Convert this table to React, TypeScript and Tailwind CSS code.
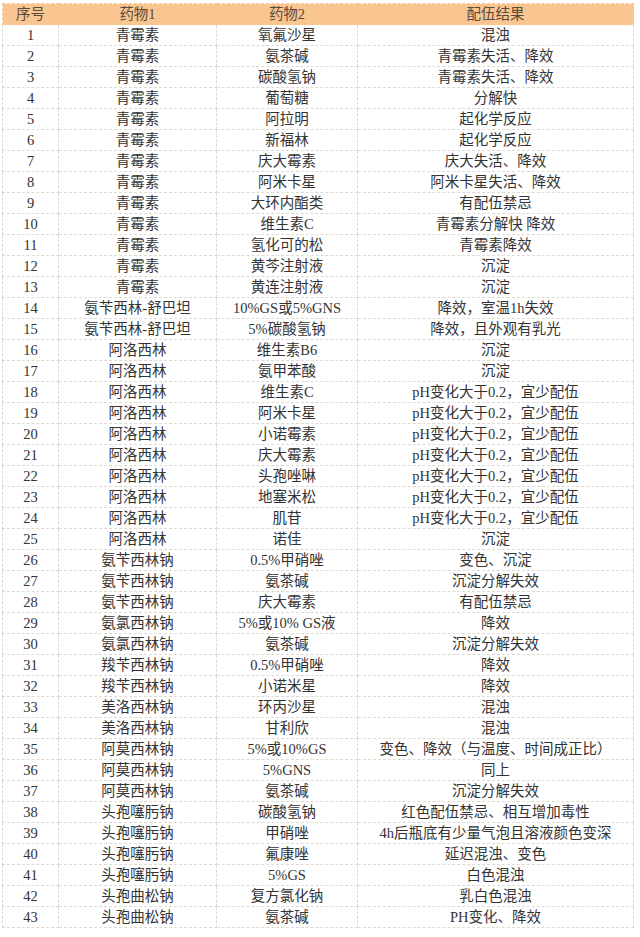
const SAME = 'pH变化大于0.2，宜少配伍';

const rows: [string, string, string][] = [
  ['青霉素', '氧氟沙星', '混浊'],
  ['青霉素', '氨茶碱', '青霉素失活、降效'],
  ['青霉素', '碳酸氢钠', '青霉素失活、降效'],
  ['青霉素', '葡萄糖', '分解快'],
  ['青霉素', '阿拉明', '起化学反应'],
  ['青霉素', '新福林', '起化学反应'],
  ['青霉素', '庆大霉素', '庆大失活、降效'],
  ['青霉素', '阿米卡星', '阿米卡星失活、降效'],
  ['青霉素', '大环内酯类', '有配伍禁忌'],
  ['青霉素', '维生素C', '青霉素分解快 降效'],
  ['青霉素', '氢化可的松', '青霉素降效'],
  ['青霉素', '黄芩注射液', '沉淀'],
  ['青霉素', '黄连注射液', '沉淀'],
  ['氨苄西林-舒巴坦', '10%GS或5%GNS', '降效，室温1h失效'],
  ['氨苄西林-舒巴坦', '5%碳酸氢钠', '降效，且外观有乳光'],
  ['阿洛西林', '维生素B6', '沉淀'],
  ['阿洛西林', '氨甲苯酸', '沉淀'],
  ['阿洛西林', '维生素C', SAME],
  ['阿洛西林', '阿米卡星', SAME],
  ['阿洛西林', '小诺霉素', SAME],
  ['阿洛西林', '庆大霉素', SAME],
  ['阿洛西林', '头孢唑啉', SAME],
  ['阿洛西林', '地塞米松', SAME],
  ['阿洛西林', '肌苷', SAME],
  ['阿洛西林', '诺佳', '沉淀'],
  ['氨苄西林钠', '0.5%甲硝唑', '变色、沉淀'],
  ['氨苄西林钠', '氨茶碱', '沉淀分解失效'],
  ['氨苄西林钠', '庆大霉素', '有配伍禁忌'],
  ['氨氯西林钠', '5%或10% GS液', '降效'],
  ['氨氯西林钠', '氨茶碱', '沉淀分解失效'],
  ['羧苄西林钠', '0.5%甲硝唑', '降效'],
  ['羧苄西林钠', '小诺米星', '降效'],
  ['美洛西林钠', '环丙沙星', '混浊'],
  ['美洛西林钠', '甘利欣', '混浊'],
  ['阿莫西林钠', '5%或10%GS', '变色、降效（与温度、时间成正比）'],
  ['阿莫西林钠', '5%GNS', '同上'],
  ['阿莫西林钠', '氨茶碱', '沉淀分解失效'],
  ['头孢噻肟钠', '碳酸氢钠', '红色配伍禁忌、相互增加毒性'],
  ['头孢噻肟钠', '甲硝唑', '4h后瓶底有少量气泡且溶液颜色变深'],
  ['头孢噻肟钠', '氟康唑', '延迟混浊、变色'],
  ['头孢噻肟钠', '5%GS', '白色混浊'],
  ['头孢曲松钠', '复方氯化钠', '乳白色混浊'],
  ['头孢曲松钠', '氨茶碱', 'PH变化、降效'],
];

const cell = 'border border-dashed border-[#dedcd2] p-0 h-[21px] leading-[20px] text-center whitespace-nowrap';

export default function App() {
  return (
    <div className="w-[640px] h-[937px] bg-white pt-[3px] pl-[2px] text-[#333333] text-[14.5px] [font-family:'Liberation_Serif','Noto_Sans_CJK_SC',serif]">
      <table className="table-fixed border-collapse w-[631px]">
        <colgroup>
          <col className="w-[56px]" />
          <col className="w-[158px]" />
          <col className="w-[141px]" />
          <col className="w-[276px]" />
        </colgroup>
        <thead>
          <tr className="bg-[#f9c590] text-[#5a4a3a]">
            <th className={`${cell} font-normal border-[#f9c590]`}>序号</th>
            <th className={`${cell} font-normal border-[#f9c590]`}>药物1</th>
            <th className={`${cell} font-normal border-[#f9c590]`}>药物2</th>
            <th className={`${cell} font-normal border-[#f9c590]`}>配伍结果</th>
          </tr>
        </thead>
        <tbody>
          {rows.map((r, i) => (
            <tr key={i}>
              <td className={cell}>{i + 1}</td>
              <td className={cell}>{r[0]}</td>
              <td className={cell}>{r[1]}</td>
              <td className={cell}>{r[2]}</td>
            </tr>
          ))}
        </tbody>
      </table>
    </div>
  );
}
